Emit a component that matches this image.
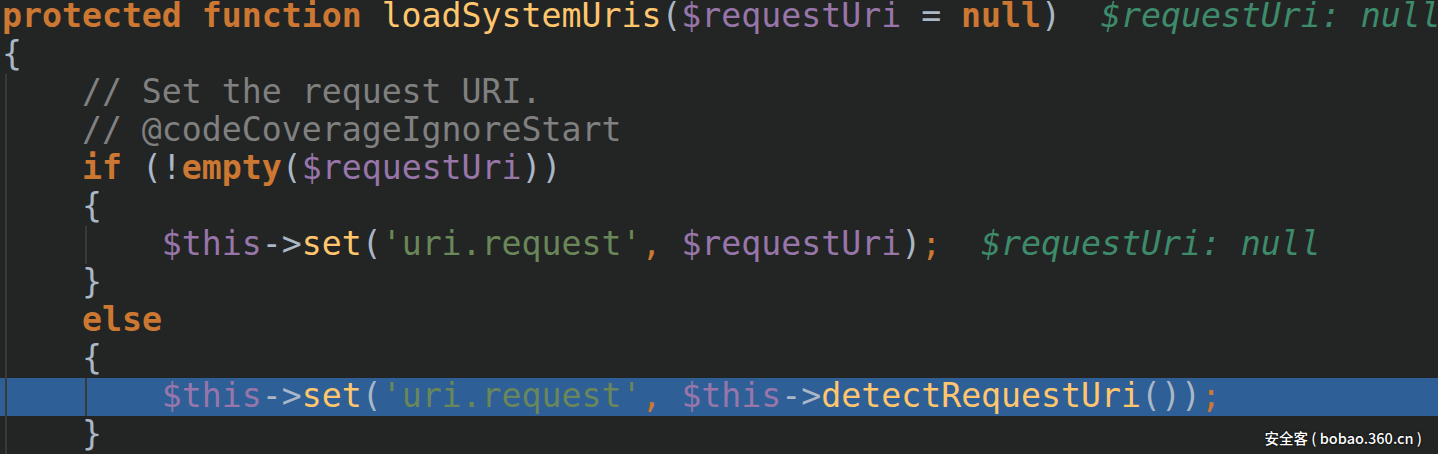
const kw = "font-bold text-[#cc7832]";
const fn = "text-[#ffc66d]";
const vr = "text-[#9876aa]";
const pn = "text-[#a9b7c6]";
const st = "text-[#6a8759]";
const cm = "text-[#808080]";
const hint = "italic text-[#3e8b6b]";
const sep = "text-[#cc7832]";

function Line({
  children,
  selected = false,
  guide = false,
}: {
  children?: React.ReactNode;
  selected?: boolean;
  guide?: boolean;
}) {
  return (
    <div
      className={`relative h-[38px] whitespace-pre pl-[2px] leading-[36px] ${
        selected ? "bg-[#2e5f97]" : ""
      }`}
    >
      {children}
      {guide && (
        <span className="absolute left-[85px] top-0 h-[38px] w-[2px] bg-[#3a3a3a]" />
      )}
    </div>
  );
}

export default function App() {
  return (
    <div className="relative h-[454px] w-[1438px] overflow-hidden bg-[#232525] [font-family:'DejaVu_Sans_Mono',monospace] text-[33.2px]">
      <div className="-mt-[2px]">
        <Line>
          <span className={kw}>protected function </span>
          <span className={fn}>loadSystemUris</span>
          <span className={pn}>(</span>
          <span className={vr}>$requestUri</span>
          <span className={pn}> = </span>
          <span className={kw}>null</span>
          <span className={pn}>)</span>
          {"  "}
          <span className={hint}>$requestUri: null</span>
        </Line>
        <Line>
          <span className={pn}>{"{"}</span>
        </Line>

        <div className="relative">
          <Line>
            <span className={cm}>{"    // Set the request URI."}</span>
          </Line>
          <Line>
            <span className={cm}>{"    // @codeCoverageIgnoreStart"}</span>
          </Line>
          <Line>
            {"    "}
            <span className={kw}>if</span>
            <span className={pn}> (!</span>
            <span className={kw}>empty</span>
            <span className={pn}>(</span>
            <span className={vr}>$requestUri</span>
            <span className={pn}>))</span>
          </Line>
          <Line>
            <span className={pn}>{"    {"}</span>
          </Line>
          <Line guide>
            {"        "}
            <span className={vr}>$this</span>
            <span className={pn}>-&gt;</span>
            <span className={fn}>set</span>
            <span className={pn}>(</span>
            <span className={st}>'uri.request'</span>
            <span className={sep}>, </span>
            <span className={vr}>$requestUri</span>
            <span className={pn}>)</span>
            <span className={sep}>;</span>
            {"  "}
            <span className={hint}>$requestUri: null</span>
          </Line>
          <Line>
            <span className={pn}>{"    }"}</span>
          </Line>
          <Line>
            {"    "}
            <span className={kw}>else</span>
          </Line>
          <Line>
            <span className={pn}>{"    {"}</span>
          </Line>
          <Line selected guide>
            {"        "}
            <span className={vr}>$this</span>
            <span className={pn}>-&gt;</span>
            <span className={fn}>set</span>
            <span className={pn}>(</span>
            <span className={st}>'uri.request'</span>
            <span className={sep}>, </span>
            <span className={vr}>$this</span>
            <span className={pn}>-&gt;</span>
            <span className={fn}>detectRequestUri</span>
            <span className={pn}>())</span>
            <span className={sep}>;</span>
          </Line>
          <Line>
            <span className={pn}>{"    }"}</span>
          </Line>
          <span className="absolute bottom-0 left-[5px] top-0 w-[2px] bg-[#3a3a3a]" />
        </div>
      </div>

      <div className="absolute bottom-[9px] right-[16px] whitespace-pre text-[14.5px] font-medium leading-none text-white [font-family:'Noto_Sans_CJK_SC','Noto_Sans',sans-serif] [text-shadow:0_0_2px_#000,0_0_1px_#000]">
        安全客 ( bobao.360.cn )
      </div>
    </div>
  );
}
